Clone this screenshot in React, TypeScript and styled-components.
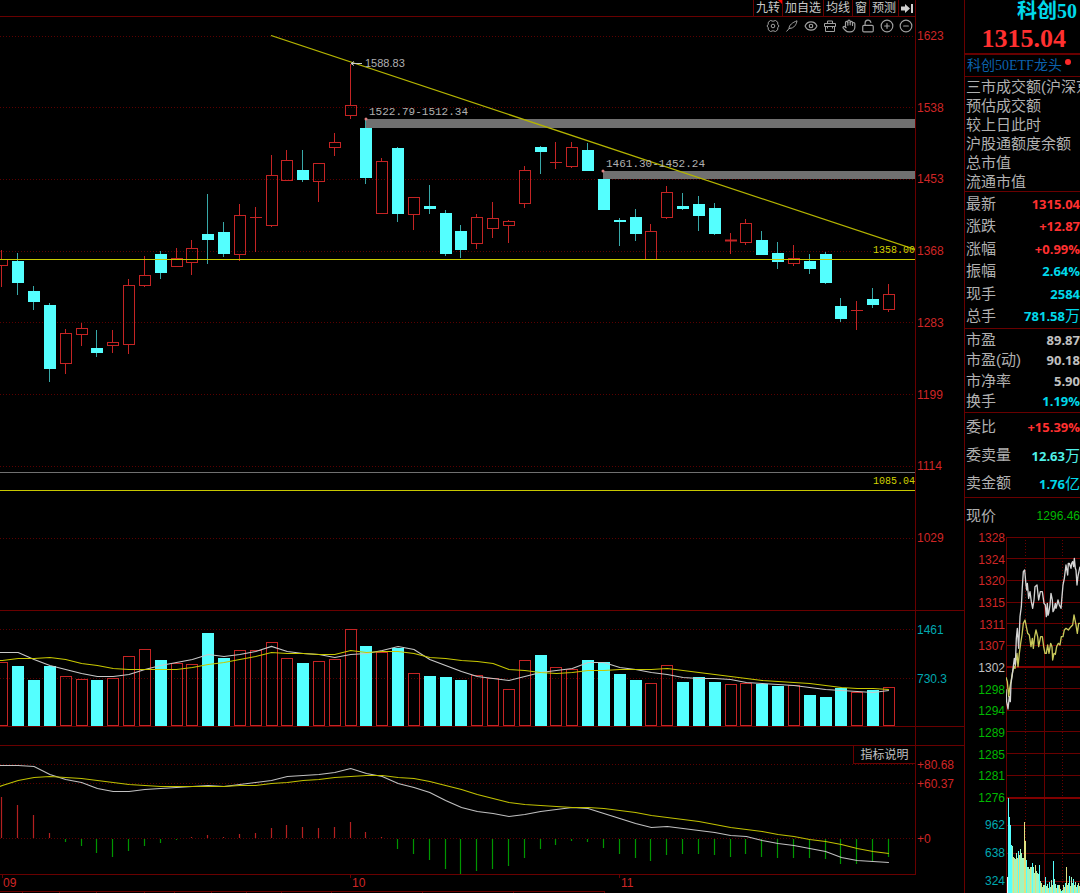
import React from 'react';
import styled, { createGlobalStyle } from 'styled-components';
import { Eye, Hand, LockOpen, CirclePlus, CircleMinus } from 'lucide-react';

const sans = `'Liberation Sans', 'Noto Sans CJK SC', sans-serif`;
const serif = `'Liberation Serif', 'Noto Sans CJK SC', serif`;
const mono = `'Liberation Mono', 'Noto Sans CJK SC', monospace`;

const c = {
  rule: '#690000',
  dim: '#5a0000',
  red: '#c42424',
  redText: '#cf2626',
  hot: '#ff3030',
  cyanFill: '#54ffff',
  cyanLine: '#38a8a8',
  cyanText: '#00d8ea',
  axisCyan: '#00a8b0',
  aqua: '#4ff0e8',
  green: '#00b800',
  label: '#b0b0b0',
};

const GlobalStyle = createGlobalStyle`
  * { box-sizing: border-box; }
  body { margin: 0; background: #000; overflow-x: hidden; }
  button { appearance: none; background: none; border: 0; margin: 0; padding: 0; font: inherit; color: inherit; cursor: pointer; }
  dl, dd, dt, h1, p { margin: 0; padding: 0; }
`;

const Screen = styled.div`
  display: grid;
  grid-template-columns: minmax(0, 1fr) 116px;
  min-height: 100vh;
  background: #000;
  color: ${c.label};
  font-family: ${sans};
  overflow: hidden;
`;

const Main = styled.main`
  display: flex;
  flex-direction: column;
  min-width: 0;
`;

const Pane = styled.section<{ $top?: boolean; $bottom?: boolean }>`
  display: grid;
  grid-template-columns: minmax(0, 1fr) 48px;
  border-top: ${p => (p.$top ? `1px solid ${c.rule}` : '0')};
  border-bottom: ${p => (p.$bottom ? `1px solid ${c.rule}` : '0')};
`;

const Plot = styled.div`
  display: flex;
  flex-direction: column;
  min-width: 0;
  border-right: 1px solid ${c.rule};
`;

const Canvas = styled.svg<{ $h: number }>`
  display: block;
  width: 100%;
  height: ${p => p.$h}px;
`;

const Spacer = styled.div`
  height: 18px;
`;

const Toolbar = styled.nav`
  display: flex;
  justify-content: flex-end;
  height: 17px;
  border-bottom: 1px solid ${c.rule};
`;

const ToolButton = styled.button<{ $flag?: boolean }>`
  position: relative;
  height: 16px;
  padding: 0 2px;
  border-left: 1px solid ${c.rule};
  font-size: 12px;
  line-height: 16px;
  color: #c8c8c8;
  white-space: nowrap;
  svg { display: block; }
  ${p => p.$flag && `
    &::after {
      content: '';
      position: absolute;
      top: 0;
      right: 0;
      border-top: 4px solid #f00;
      border-left: 4px solid transparent;
    }
  `}
`;

const IconRow = styled.div`
  display: flex;
  justify-content: flex-end;
  align-items: center;
  gap: 5px;
  height: 18px;
  padding-right: 2px;
`;

const IconButton = styled.button`
  width: 14px;
  height: 14px;
  color: #a0a0a0;
  svg { display: block; }
`;

const Axis = styled.div<{ $color: string; $pad: number }>`
  display: flex;
  flex-direction: column;
  padding: ${p => p.$pad}px 0 0 1px;
  color: ${p => p.$color};
  font-size: 12px;
  line-height: 16px;
`;

const Scale = styled.div<{ $h: number; $gap?: number }>`
  display: flex;
  flex-direction: column;
  justify-content: space-between;
  height: ${p => p.$h}px;
  margin-top: ${p => p.$gap ?? 0}px;
`;

const HelpRow = styled.div`
  display: flex;
  justify-content: flex-end;
  height: 18px;
`;

const HelpButton = styled.button`
  width: 62px;
  border-left: 1px solid ${c.rule};
  border-bottom: 1px solid ${c.rule};
  font-size: 12px;
  line-height: 18px;
  color: #c0c0c0;
`;

const DateRow = styled.div`
  margin-right: 48px;
  border-top: 1px solid ${c.rule};
`;

const Side = styled.aside`
  display: flex;
  flex-direction: column;
  min-width: 0;
  overflow: hidden;
  border-left: 1px solid ${c.rule};
  white-space: nowrap;
`;

const Quote = styled.header`
  display: flex;
  flex-direction: column;
  align-items: flex-end;
  height: 55px;
  border-bottom: 2px solid ${c.rule};
  font-family: ${serif};
  font-weight: bold;
`;

const Title = styled.h1`
  padding-right: 3px;
  font-size: 20px;
  line-height: 22px;
  color: ${c.cyanText};
`;

const Price = styled.p`
  padding-right: 14px;
  font-size: 26px;
  line-height: 34px;
  color: ${c.hot};
`;

const Related = styled.div`
  display: flex;
  height: 22px;
  padding-left: 2px;
  border-bottom: 1px solid ${c.rule};
  font-family: ${serif};
  font-size: 14px;
  line-height: 22px;
  a { color: #0b62ae; text-decoration: none; }
`;

const Dot = styled.span`
  width: 6px;
  height: 6px;
  margin: 4px 0 0 3px;
  border-radius: 50%;
  background: #ff2828;
`;

const Facts = styled.dl<{ $h: number; $pad?: number }>`
  display: flex;
  flex-direction: column;
  justify-content: space-between;
  height: ${p => p.$h}px;
  padding: ${p => p.$pad ?? 1}px 0 ${p => p.$pad ?? 0}px 1px;
  border-bottom: 1px solid ${c.rule};
`;

const Fact = styled.div`
  display: flex;
  justify-content: space-between;
  align-items: center;
  height: 18px;
`;

const Term = styled.dt`
  font-size: 15px;
  line-height: 18px;
  color: ${c.label};
`;

const Value = styled.dd<{ $color: string; $plain?: boolean }>`
  font-family: ${p => (p.$plain ? sans : `'Open Sans', 'Noto Sans CJK SC', sans-serif`)};
  font-size: ${p => (p.$plain ? 12 : 13)}px;
  font-weight: ${p => (p.$plain ? 400 : 700)};
  line-height: 18px;
  color: ${p => p.$color};
  span { font-size: 15px; font-weight: 400; }
`;

const NowRow = styled.dl`
  display: flex;
  justify-content: space-between;
  align-items: center;
  height: 32px;
  padding: 4px 0 0 1px;
`;

const Mini = styled.section`
  display: grid;
  grid-template-columns: 41px minmax(0, 1fr);
`;

const MiniAxis = styled.div`
  display: flex;
  flex-direction: column;
  padding-right: 1px;
  font-size: 12px;
  line-height: 16px;
  text-align: right;
`;

const Tick = styled.span<{ $color: string }>`
  color: ${p => p.$color};
`;

type Candle = [kind: 'r' | 'c', high: number, top: number, bottom: number, low: number];

const candles: Candle[] = [
  ['r', 250, 259, 266, 287], ['c', 253, 261, 283, 295], ['c', 286, 291, 302, 310], ['c', 303, 305, 369, 382],
  ['r', 329, 333, 364, 374], ['r', 323, 328, 335, 346], ['c', 330, 348, 353, 357], ['r', 330, 342, 346, 353],
  ['r', 279, 285, 345, 354], ['r', 256, 275, 286, 287], ['c', 251, 254, 273, 279], ['r', 248, 258, 267, 267],
  ['r', 240, 248, 263, 275], ['c', 194, 234, 240, 264], ['c', 222, 232, 254, 257], ['r', 204, 215, 255, 261],
  ['r', 207, 217, 217, 252], ['r', 155, 175, 226, 227], ['r', 150, 160, 181, 181], ['c', 150, 170, 180, 182],
  ['r', 163, 163, 182, 202], ['r', 133, 142, 148, 156], ['r', 64, 105, 116, 119], ['c', 119, 128, 178, 184],
  ['r', 158, 161, 214, 214], ['c', 147, 148, 214, 222], ['r', 197, 197, 215, 230], ['c', 185, 206, 209, 214],
  ['c', 210, 213, 254, 256], ['c', 225, 231, 250, 258], ['r', 214, 217, 244, 249], ['r', 202, 218, 229, 238],
  ['r', 220, 221, 226, 243], ['r', 166, 170, 204, 208], ['c', 146, 147, 152, 174], ['r', 142, 162, 162, 169],
  ['r', 142, 147, 167, 168], ['c', 143, 150, 171, 171], ['c', 179, 179, 210, 210], ['c', 218, 220, 222, 246],
  ['c', 209, 217, 234, 241], ['r', 224, 231, 260, 260], ['r', 186, 192, 218, 219], ['c', 193, 206, 209, 210],
  ['c', 196, 204, 216, 231], ['c', 203, 208, 234, 235], ['r', 233, 240, 241, 254], ['r', 219, 223, 243, 245],
  ['c', 231, 240, 255, 255], ['c', 242, 253, 262, 269], ['r', 245, 258, 264, 266], ['c', 254, 261, 269, 274],
  ['c', 252, 254, 283, 284], ['c', 298, 306, 319, 322], ['r', 301, 310, 310, 330], ['c', 288, 299, 305, 308],
  ['r', 284, 294, 310, 312],
];

const volumeTops = [
  662, 666, 680, 666, 676, 679, 680, 678, 656, 649, 660, 663, 664, 633, 658, 650, 650, 642, 658,
  663, 661, 659, 629, 646, 652, 648, 673, 676, 677, 680, 675, 678, 689, 660, 655, 667, 669, 660,
  662, 674, 680, 683, 665, 682, 677, 682, 684, 683, 684, 686, 685, 695, 697, 688, 692, 690, 687,
];
const volumeFast = [
  652, 652, 659, 665, 669, 673, 676, 676, 674, 669, 665, 662, 659, 654, 656, 654, 651, 646, 651,
  653, 654, 657, 654, 653, 650, 646, 649, 659, 665, 671, 676, 678, 680, 676, 672, 670, 668, 662,
  662, 667, 669, 672, 674, 677, 678, 678, 679, 682, 683, 684, 685, 687, 689, 690, 691, 692, 690,
];
const volumeSlow = [
  660, 658, 658, 657, 659, 663, 665, 668, 669, 669, 669, 669, 667, 664, 662, 659, 656, 652, 653,
  653, 654, 654, 650, 652, 651, 651, 653, 657, 658, 660, 661, 663, 669, 670, 672, 673, 672, 670,
  670, 669, 669, 669, 668, 670, 672, 674, 676, 678, 680, 681, 682, 683, 685, 687, 688, 688, 689,
];
const dif = [
  765, 765, 766, 774, 779, 782, 788, 791, 791, 789, 788, 787, 786, 785, 786, 784, 782, 780, 776,
  775, 774, 772, 768, 773, 776, 783, 787, 792, 800, 807, 811, 813, 816, 814, 811, 809, 807, 808,
  813, 818, 823, 827, 826, 828, 830, 832, 835, 836, 840, 843, 845, 848, 851, 857, 860, 861, 862,
];
const dea = [
  785, 780, 777, 776, 777, 778, 780, 782, 784, 785, 786, 786, 786, 786, 786, 785, 785, 783, 782,
  780, 779, 777, 776, 775, 775, 777, 778, 781, 785, 789, 794, 798, 802, 804, 805, 806, 807, 807,
  808, 810, 812, 815, 817, 819, 821, 824, 827, 829, 831, 834, 836, 839, 841, 844, 848, 851, 853,
];
const histogram = [
  797, 805, 815, 833, 842, 846, 853, 857, 851, 846, 843, 840, 837, 835, 837, 834, 833, 828, 825,
  827, 828, 827, 822, 832, 837, 849, 854, 860, 869, 874, 871, 869, 866, 858, 849, 845, 841, 842,
  848, 854, 858, 861, 855, 854, 854, 855, 857, 854, 857, 858, 858, 858, 859, 864, 864, 861, 857,
];

const LEFT = -3000;
const xAt = (i: number) => 2.4 + 15.83 * i;
const linePoints = (ys: number[]) => ys.map((y, i) => `${xAt(i).toFixed(1)},${y + 0.5}`).join(' ');

const DottedRule = ({ y }: { y: number }) => (
  <line x1={LEFT} x2={915} y1={y} y2={y} stroke={c.dim} strokeDasharray="1 2" shapeRendering="crispEdges" />
);

const Bar = ({ kind, x, top, bottom }: { kind: 'r' | 'c'; x: number; top: number; bottom: number }) =>
  kind === 'c' ? (
    <rect x={x - 6} y={top} width={12} height={Math.max(bottom - top, 1)} fill={c.cyanFill} />
  ) : (
    <rect x={x - 5.5} y={top + 0.5} width={11} height={Math.max(bottom - top - 1, 0)} fill="none" stroke={c.red} />
  );

const PriceChart = () => (
  <Canvas $h={575} viewBox="0 35 915 575" preserveAspectRatio="xMaxYMin meet" role="img" aria-label="K线">
    {[36.5, 107.5, 179.5, 251.5, 322.5, 394.5, 466.5, 538.5].map(y => <DottedRule key={y} y={y} />)}
    <g shapeRendering="crispEdges">
      <rect x={366} y={119} width={549} height={9} fill="#707070" />
      <rect x={603} y={171} width={312} height={8} fill="#707070" />
      <path d={`M${LEFT} 472.5H915`} stroke="#707070" />
    </g>
    {candles.map(([kind, high, top, bottom, low], i) => {
      const x = Math.round(xAt(i));
      const wick = kind === 'c' ? c.cyanLine : c.red;
      return (
        <g key={i}>
          <path d={`M${x - 0.5} ${high}V${top}M${x - 0.5} ${bottom}V${low}`} stroke={wick} />
          {bottom - top < 2
            ? <path d={`M${x - 6} ${top + 0.5}h12`} stroke={wick} strokeWidth={bottom === top ? 1 : 2} />
            : <Bar kind={kind} x={x} top={top} bottom={bottom} />}
        </g>
      );
    })}
    {[[366, 119], [603, 171]].map(([x, y]) => <circle key={x} cx={x} cy={y} r={1.5} fill="#e08080" />)}
    <path d={`M${LEFT} 259.5H915M${LEFT} 490.5H915`} stroke="#c8c800" />
    <path d="M271 35.5L915 249.5" stroke="#b4b400" strokeWidth={1.2} />
    <path d="M351 63.5H362M351 63.5l3-2M351 63.5l3 2" stroke="#c8c8c8" fill="none" />
    <g fill="#b0b0b0" fontSize={11}>
      <text x={365} y={67} fontFamily={sans}>1588.83</text>
      <text x={369} y={115} fontFamily={mono}>1522.79-1512.34</text>
      <text x={606} y={167} fontFamily={mono}>1461.30-1452.24</text>
    </g>
    <g fill="#d0d000" fontSize={10} fontFamily={mono} textAnchor="end">
      <text x={915} y={253}>1358.00</text>
      <text x={915} y={484}>1085.04</text>
    </g>
  </Canvas>
);

const VolumeChart = () => (
  <Canvas $h={115} viewBox="0 611 915 115" preserveAspectRatio="xMaxYMin meet" role="img" aria-label="成交量">
    <DottedRule y={629.5} />
    <DottedRule y={678.5} />
    {volumeTops.map((top, i) => (
      <Bar key={i} kind={candles[i][0]} x={Math.round(xAt(i))} top={top} bottom={726} />
    ))}
    <polyline points={`0,652.5 ${linePoints(volumeFast)}`} fill="none" stroke="#c8c8c8" strokeWidth={1.2} />
    <polyline points={`0,660.5 ${linePoints(volumeSlow)}`} fill="none" stroke="#c8c800" strokeWidth={1.2} />
  </Canvas>
);

const MacdChart = () => (
  <Canvas $h={110} viewBox="0 764 915 110" preserveAspectRatio="xMaxYMin meet" role="img" aria-label="MACD">
    <DottedRule y={764.5} />
    <DottedRule y={783.5} />
    <DottedRule y={838.5} />
    {histogram.map((y, i) => {
      const x = Math.round(xAt(i)) - 0.5;
      return <path key={i} d={`M${x} ${y < 838 ? 838 : 839}V${y}`} stroke={y < 838 ? '#b42020' : '#009600'} strokeWidth={1.2} />;
    })}
    <polyline points={`0,765.5 ${linePoints(dif)}`} fill="none" stroke="#c0c0c0" strokeWidth={1.2} />
    <polyline points={`0,786.5 ${linePoints(dea)}`} fill="none" stroke="#c0c000" strokeWidth={1.2} />
  </Canvas>
);

const DateAxis = () => (
  <Canvas $h={18} viewBox="0 875 916 18" preserveAspectRatio="xMaxYMin meet" role="img" aria-label="月份">
    <path d="M2.5 875v3M350.5 875v3M619.5 875v3" stroke={c.rule} />
    <g fill={c.redText} fontSize={12} fontFamily={sans}>
      <text x={3} y={887}>09</text>
      <text x={352} y={887}>10</text>
      <text x={621} y={887}>11</text>
    </g>
    <path d={`M${LEFT} 891.5H605`} stroke={c.rule} />
    <path d="M22.5 891v2M59.5 891v2M96.5 891v2M144.5 891v2M174.5 891v2M211.5 891v2M246.5 891v2M281.5 891v2M331.5 891v2M422.5 891v2M513.5 891v2M604.5 891v2" stroke={c.rule} />
  </Canvas>
);

/* Intraday curves on a grid three times finer than the drawn size. */
const intraday = '0,460 2,497 6,519 10,482 13,497 15,442 20,407 25,367 28,387 31,307 34,277 38,337 42,242 46,212 49,152 52,107 56,102 60,147 62,162 64,142 68,187 72,167 76,197 80,217 84,192 87,152 93,147 98,192 103,167 109,167 114,202 118,207 121,242 124,202 126,238 128,232 132,207 135,172 139,192 141,227 144,222 148,202 150,217 152,210 156,192 160,207 165,217 168,182 171,147 175,127 180,87 185,117 187,82 190,82 195,97 197,82 200,77 203,92 205,67 208,97 210,102 213,147 216,120 222,92';
const average = '0,424 4,437 8,482 11,457 15,437 20,407 24,392 27,397 30,372 33,352 36,392 40,352 44,322 48,297 52,262 57,252 61,272 65,292 70,297 75,332 79,307 82,337 86,302 90,282 95,302 98,332 104,302 109,302 113,332 117,352 121,352 125,327 129,352 134,322 138,332 140,372 144,352 148,355 152,332 157,322 162,327 166,302 171,302 175,282 180,277 187,282 195,272 200,267 204,237 210,267 214,292 218,262 222,262';
const turnover = [
  1070, 835, 890, 915, 975, 978, 1010, 1015, 1018, 1000, 1015, 992, 1006, 988, 1000, 1015, 1014,
  905, 962, 1020, 1042, 1040, 1048, 1042, 1040, 1028, 1040, 1058, 1036, 1052, 1060, 1062, 1034,
  1082, 1088, 1102, 1094, 1096, 1070, 1098, 1092, 1104, 1086, 1100, 1080, 1096, 1022, 1078, 1092,
  1104, 1096, 1094, 1094, 1108, 1112, 1110, 1096, 1100, 1088, 1040, 1096, 1088, 1068, 1098, 1070,
  1090, 1076, 1094, 1086, 1100, 1096, 1090, 1098, 1094,
];
const yellowBars = new Set([6, 10, 12, 17, 18, 23, 28, 34, 37, 41, 45, 49, 52, 57, 59, 63, 67, 71]);
const cyanBars = new Set([1, 2, 3, 4, 11, 19, 25, 32, 38, 42, 46, 50, 54, 58, 62, 66, 70]);
const barColor = (i: number) =>
  i === 0 ? '#e8ffff' : yellowBars.has(i) ? '#e0e080' : cyanBars.has(i) ? c.cyanFill : '#a0f6c0';

const IntradayChart = () => (
  <Canvas $h={363} viewBox="0 530 74 363" preserveAspectRatio="xMinYMin meet" role="img" aria-label="分时">
    <g stroke={c.rule} fill="none" shapeRendering="crispEdges">
      {[537, 558, 580, 602, 623, 645, 688, 710, 731, 753, 775, 825, 853, 881].map(y => (
        <path key={y} d={`M0 ${y}.5H2000`} />
      ))}
      <path d="M0.5 537V893M38.5 537V893" />
      <path d="M19.5 537V893M56.5 537V893" strokeDasharray="1 2" />
      <path d="M0 667H2000M0 798H2000" stroke="#800000" strokeWidth={2} />
    </g>
    {turnover.map((z, i) => {
      const top = 520 + Math.round(z / 3);
      return <rect key={i} x={i + 1} y={top} width={1} height={893 - top} fill={barColor(i)} shapeRendering="crispEdges" />;
    })}
    <g transform="translate(0 536) scale(0.3333)" fill="none" strokeWidth={4} strokeLinejoin="round">
      <polyline points={average} stroke="#c8c85a" />
      <polyline points={intraday} stroke="#d4d4d4" />
    </g>
  </Canvas>
);

const JumpEndIcon = () => (
  <svg width="12" height="14" viewBox="0 0 12 14" fill="#d0d0d0">
    <path d="M0 5.500h4V3l5 4.500-5 4.500V9.500H0zM10 3h2v9h-2z" />
  </svg>
);

const line = { width: 14, height: 14, viewBox: '0 0 14 14', fill: 'none', stroke: 'currentColor', strokeLinejoin: 'round' as const };

const GearIcon = () => (
  <svg {...line}>
    <path d="M4.500 1.500Q7 3 9.500 1.500L11.700 3.200Q11.200 5.500 13 7Q11.200 8.500 11.700 10.800L9.500 12.500Q7 11 4.500 12.500L2.300 10.800Q2.800 8.500 1 7Q2.800 5.500 2.300 3.200z" />
    <circle cx="7" cy="7" r="1.800" />
  </svg>
);

const QuillIcon = () => (
  <svg {...line}>
    <path d="M1.500 12.500L5 8.500M4 9.500C4 6 7.500 3.500 12 1.800C11.500 5 9.500 9.500 4 9.500" />
  </svg>
);

const CaseIcon = () => (
  <svg {...line}>
    <path d="M4.500 4V2h5v2M1.500 4.500h11v3h-11zM2.500 7.500v5h9v-5M4.500 7v2.500M9.500 7v2.500" />
  </svg>
);

const tools: { label: string; icon: React.ReactNode }[] = [
  { label: '设置', icon: <GearIcon /> },
  { label: '画线', icon: <QuillIcon /> },
  { label: '显示', icon: <Eye size={14} strokeWidth={2} /> },
  { label: '工具箱', icon: <CaseIcon /> },
  { label: '拖动', icon: <Hand size={14} strokeWidth={2} /> },
  { label: '锁定', icon: <LockOpen size={14} strokeWidth={2} /> },
  { label: '放大', icon: <CirclePlus size={14} strokeWidth={2} /> },
  { label: '缩小', icon: <CircleMinus size={14} strokeWidth={2} /> },
];

type Row = [term: string, value?: string, color?: string, unit?: string];

const FactList = ({ rows, height, pad }: { rows: Row[]; height: number; pad?: number }) => (
  <Facts $h={height} $pad={pad}>
    {rows.map(([term, value, color, unit]) => (
      <Fact key={term}>
        <Term>{term}</Term>
        {value && <Value $color={color ?? c.label}>{value}{unit && <span>{unit}</span>}</Value>}
      </Fact>
    ))}
  </Facts>
);

const miniTicks = [1328, 1324, 1320, 1315, 1311, 1307, 1302, 1298, 1294, 1289, 1285, 1281, 1276];
const tickColor = (v: number) => (v > 1302 ? c.redText : v === 1302 ? '#c0c0c0' : c.green);

export default function App() {
  return (
    <Screen>
      <GlobalStyle />
      <Main>
        <Pane $bottom>
          <Plot>
            <Toolbar>
              <ToolButton $flag>九转</ToolButton>
              <ToolButton>加自选</ToolButton>
              <ToolButton>均线</ToolButton>
              <ToolButton>窗</ToolButton>
              <ToolButton>预测</ToolButton>
              <ToolButton aria-label="跳到最新"><JumpEndIcon /></ToolButton>
            </Toolbar>
            <IconRow>
              {tools.map(t => <IconButton key={t.label} aria-label={t.label}>{t.icon}</IconButton>)}
            </IconRow>
            <PriceChart />
          </Plot>
          <Axis $color={c.redText} $pad={28}>
            <Scale $h={518}>
              {[1623, 1538, 1453, 1368, 1283, 1199, 1114, 1029].map(v => <span key={v}>{v}</span>)}
            </Scale>
          </Axis>
        </Pane>
        <Pane $bottom>
          <Plot><VolumeChart /></Plot>
          <Axis $color={c.axisCyan} $pad={11}>
            <Scale $h={65}><span>1461</span><span>730.3</span></Scale>
          </Axis>
        </Pane>
        <Pane><Plot><Spacer /></Plot></Pane>
        <Pane $top>
          <Plot>
            <HelpRow><HelpButton>指标说明</HelpButton></HelpRow>
            <MacdChart />
          </Plot>
          <Axis $color={c.redText} $pad={11}>
            <Scale $h={35}><span>+80.68</span><span>+60.37</span></Scale>
            <Scale $h={16} $gap={39}><span>+0</span></Scale>
          </Axis>
        </Pane>
        <DateRow><DateAxis /></DateRow>
      </Main>
      <Side>
        <Quote>
          <Title>科创50</Title>
          <Price>1315.04</Price>
        </Quote>
        <Related><a href="#etf">科创50ETF龙头</a><Dot /></Related>
        <FactList
          height={115}
          rows={[['三市成交额(沪深京'], ['预估成交额'], ['较上日此时'], ['沪股通额度余额'], ['总市值'], ['流通市值']]}
        />
        <FactList
          height={137}
          pad={3}
          rows={[
            ['最新', '1315.04', c.hot], ['涨跌', '+12.87', c.hot], ['涨幅', '+0.99%', c.hot],
            ['振幅', '2.64%', c.cyanText], ['现手', '2584', c.cyanText], ['总手', '781.58', c.cyanText, '万'],
          ]}
        />
        <FactList
          height={84}
          pad={2}
          rows={[
            ['市盈', '89.87', '#c0c0c0'], ['市盈(动)', '90.18', '#c0c0c0'],
            ['市净率', '5.90', '#c0c0c0'], ['换手', '1.19%', c.cyanText],
          ]}
        />
        <FactList
          height={85}
          pad={5}
          rows={[['委比', '+15.39%', c.hot], ['委卖量', '12.63', c.aqua, '万'], ['卖金额', '1.76', c.cyanText, '亿']]}
        />
        <NowRow>
          <Term>现价</Term>
          <Value $color={c.green} $plain>1296.46</Value>
        </NowRow>
        <Mini>
          <MiniAxis>
            <Scale $h={276}>
              {miniTicks.map(v => <Tick key={v} $color={tickColor(v)}>{v}</Tick>)}
            </Scale>
            <Scale $h={72} $gap={11}>
              {[962, 638, 324].map(v => <Tick key={v} $color={c.axisCyan}>{v}</Tick>)}
            </Scale>
          </MiniAxis>
          <IntradayChart />
        </Mini>
      </Side>
    </Screen>
  );
}
